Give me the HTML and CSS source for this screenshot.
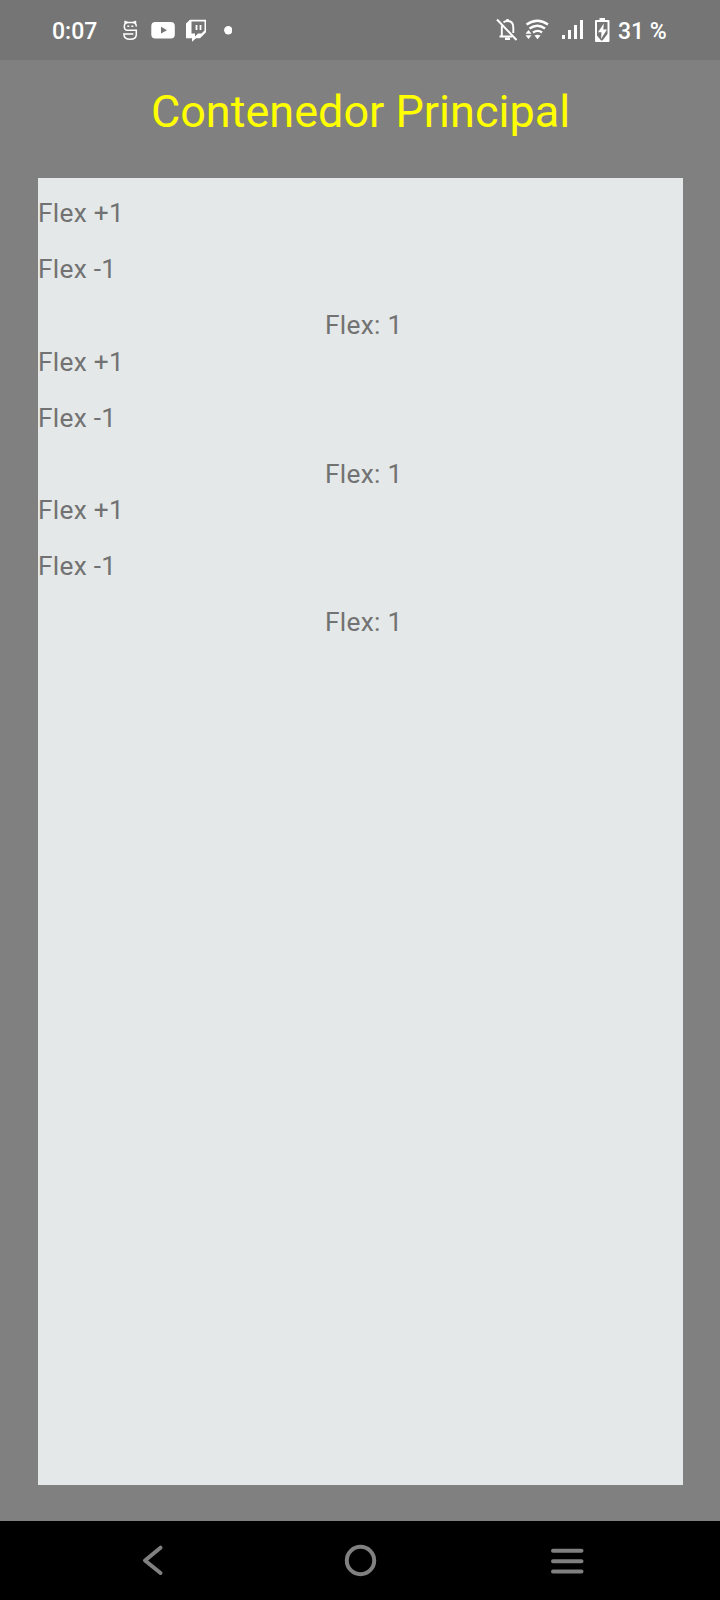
FILE: index.html
```html
<!DOCTYPE html>
<html lang="es">
<head>
<meta charset="utf-8">
<title>Contenedor Principal</title>
<link rel="stylesheet" href="styles.css">
</head>
<body>
<div class="screen">
  <div class="status">
    <span class="clock">0:07</span>
    <svg class="notifications" width="112" height="60" viewBox="120 0 112 60" fill="none" stroke="#fff">
      <path d="M136.300 26.500q0-4-4-4h-4q-4 0-4 4 0 3.700 3 3.700h9v4.300q0 4.800-6.200 4.800t-6.200-5.300h9.500" stroke-width="1.500"/>
      <path d="M124.800 23.500v-2.500l3 1.200zM135.800 23.500v-2.500l-3 1.200z" fill="#fff" stroke-width=".8"/>
      <path d="M127.300 26.300h2M131.300 26.300h2" stroke-width="1.500"/>
      <rect x="151.300" y="22" width="23.500" height="16.500" rx="4" fill="#fff" stroke="none"/>
      <path d="M161 26.800v6.800l6-3.400z" fill="#757575" stroke="none"/>
      <path fill-rule="evenodd" fill="#fff" stroke="none" d="M190 19.700h16v12.500l-6 6h-4l-4 3.500v-3.500h-6V23.500zM191.500 21.500v12h3.500v3l3-3h3.500l3-3v-9z"/>
      <path d="M196.500 25v5M200.500 25v5" stroke-width="1.800"/>
      <circle cx="228.300" cy="30.300" r="4.200" fill="#fff" stroke="none"/>
    </svg>
    <svg class="system" width="120" height="60" viewBox="494 0 120 60" fill="none" stroke="#fff">
      <path d="M503.500 22.300q1.300-1.300 4-1.300 5.800 0 5.800 6.500v5.500M501.800 25.500v10.200M499.500 36.500h12.500" stroke-width="1.900"/>
      <path d="M507.500 19v3M505 38.700h5" stroke-width="2.400"/>
      <path d="M497 19.500l19.500 20.500" stroke-width="2"/>
      <path d="M526.500 24.500q11-7.500 21.500 0M529.500 28.500q8-5.500 15.500 0M533 32.500q5-3.200 9 0" stroke-width="2.300"/>
      <path d="M534.500 35.500q3-1.500 6 0l-3 3.700zM525.500 33.700l3-3.700 3 3.700zM525.500 35.200h6l-3 3.800z" fill="#fff" stroke="none"/>
      <path d="M562 35h3v4h-3zM568 30h3v9h-3zM574 25h3v14h-3zM580 20h3v19h-3z" fill="#fff" stroke="none"/>
      <path d="M599.500 18h5.500v2h3.500q1 0 1 1v20q0 1-1 1h-12.500q-1 0-1-1v-20q0-1 1-1h3.500z" fill="#fff" stroke="none"/>
      <path d="M597 22h10.500v12l-5 6.500h-1.500l-4-5z" fill="#757575" stroke="none"/>
      <path d="M603.800 23.500l-5.800 8.800h3.500l-.5 6.700 6-9.500h-3.700z" fill="#fff" stroke="none"/>
    </svg>
    <span class="battery">31 %</span>
  </div>
  <main class="main">
    <h1 class="title">Contenedor Principal</h1>
    <div class="panel">
      <section class="group">
        <span class="label">Flex +1</span>
        <span class="label">Flex -1</span>
        <span class="label value">Flex: 1</span>
      </section>
      <section class="group">
        <span class="label">Flex +1</span>
        <span class="label">Flex -1</span>
        <span class="label value">Flex: 1</span>
      </section>
      <section class="group">
        <span class="label">Flex +1</span>
        <span class="label">Flex -1</span>
        <span class="label value">Flex: 1</span>
      </section>
    </div>
  </main>
  <nav class="nav">
    <svg width="40" height="40" viewBox="133 1540 40 40"><path d="M160.500 1547.700l-15.500 12.800 15.500 12.500"/></svg>
    <svg width="40" height="40" viewBox="340 1540 40 40"><circle cx="360.500" cy="1560.500" r="13.700"/></svg>
    <svg width="40" height="40" viewBox="547 1540 40 40"><path d="M553 1550.700h28.500M553 1561.200h28.500M553 1571.600h28.500"/></svg>
  </nav>
</div>
</body>
</html>
```
FILE: styles.css
```css
body {
  margin: 0;
  font-family: Roboto, "Liberation Sans", sans-serif;
}

.screen {
  display: flex;
  flex-direction: column;
  width: 720px;
  height: 1600px;
  background: #808080;
}

.status {
  display: flex;
  align-items: center;
  box-sizing: border-box;
  height: 60px;
  padding-left: 52px;
  background: #757575;
  color: #fff;
  font-size: 23px;
  font-weight: 500;
  line-height: 58px;
}

.clock {
  width: 68px;
  padding-top: 4px;
}

.system {
  margin-left: 262px;
}

.battery {
  padding: 4px 0 0 4px;
  white-space: pre;
}

.main {
  display: flex;
  flex: 1;
  flex-direction: column;
  padding: 22px 37px 36px 38px;
}

.title {
  margin: 0 0 36px;
  color: #ff0;
  font-size: 45px;
  font-weight: 400;
  line-height: 60px;
  text-align: center;
}

.panel {
  flex: 1;
  padding-top: 17px;
  background: #e4e8e9;
}

.group {
  display: flex;
  flex-direction: column;
  gap: 20px;
  margin-bottom: 0.5px;
}

.label {
  color: #727272;
  font-size: 26.25px;
  letter-spacing: 0.28px;
  line-height: 36px;
}

.value {
  padding-left: 287px;
}

.nav {
  display: flex;
  align-items: center;
  justify-content: space-between;
  box-sizing: border-box;
  height: 79px;
  padding: 0 133px 1px;
  background: #000;
}

.nav svg {
  fill: none;
  stroke: #808080;
  stroke-width: 4;
  stroke-linecap: round;
  stroke-linejoin: round;
}
```
